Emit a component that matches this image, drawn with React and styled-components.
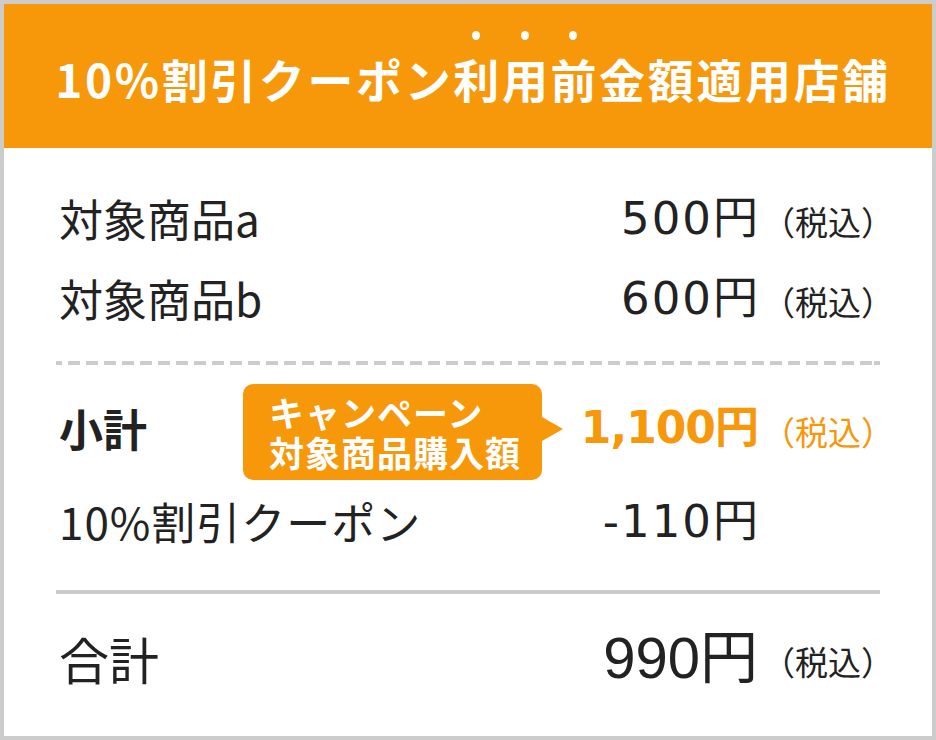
import React from "react";
import styled, { createGlobalStyle } from "styled-components";

const ORANGE = "#f7970a";
const INK = "#222";
const LINE = "#cccccc";

const GlobalStyle = createGlobalStyle`
  html, body {
    margin: 0;
    background: #fff;
  }
  body {
    font-family: "Noto Sans CJK JP", "Noto Sans", sans-serif;
  }
`;

const Card = styled.div`
  width: 936px;
  height: 740px;
  box-sizing: border-box;
  border: 4px solid ${LINE};
  background: #fff;
  display: flex;
  flex-direction: column;
`;

const Header = styled.h1`
  margin: 0;
  flex: none;
  height: 144px;
  box-sizing: border-box;
  padding: 4px 0 0 10px;
  background: ${ORANGE};
  color: #fff;
  display: flex;
  align-items: center;
  justify-content: center;
  font-size: 46px;
  font-weight: 700;
  letter-spacing: 2.6px;
  white-space: nowrap;
`;

const Dotted = styled.span`
  position: relative;
  display: inline-block;
  line-height: 1;
  &::before {
    content: "";
    position: absolute;
    left: 50%;
    top: -24px;
    width: 8px;
    height: 9px;
    margin-left: -5.3px;
    border-radius: 50%;
    background: #fff;
  }
`;

const Body = styled.div`
  padding: 34px 52px 0;
`;

const Row = styled.div`
  display: grid;
  grid-template-columns: 1fr auto 122px;
  align-items: center;
  height: ${(p) => p.$h || 80}px;
  margin-top: ${(p) => p.$mt || 0}px;
  color: ${(p) => (p.$accent ? ORANGE : INK)};
`;

const Label = styled.div`
  display: flex;
  align-items: center;
  padding: 0 0 ${(p) => (p.$flat ? 0 : 8)}px 3px;
  color: ${INK};
  font-size: ${(p) => p.$size || 44}px;
  font-weight: ${(p) => (p.$bold ? 700 : 400)};
  letter-spacing: ${(p) => p.$ls || 0}px;
  line-height: 1;
  white-space: nowrap;
`;

const LabelText = styled.span`
  flex: none;
  width: ${(p) => (p.$w ? `${p.$w}px` : "auto")};
  padding-bottom: 8px;
`;

const Amount = styled.div`
  font-family: ${(p) =>
    p.$face === "narrow"
      ? `"Liberation Sans", "Noto Sans CJK JP", sans-serif`
      : `"DejaVu Sans", "Noto Sans CJK JP", sans-serif`};
  font-size: ${(p) => p.$size || 45}px;
  font-weight: ${(p) => (p.$bold ? 700 : 400)};
  letter-spacing: ${(p) => (p.$ls === undefined ? 2 : p.$ls)}px;
  margin-right: ${(p) => (p.$ls === undefined ? -2 : 0)}px;
  padding-bottom: 8px;
  line-height: 1;
  text-align: right;
  white-space: nowrap;
`;

const Tax = styled.div`
  font-size: 33px;
  line-height: 1;
  padding: 0 0 2px 4px;
  white-space: nowrap;
`;

const Callout = styled.div`
  position: relative;
  flex: none;
  width: 299px;
  height: 96px;
  box-sizing: border-box;
  padding: 8px 0 0 26px;
  background: ${ORANGE};
  border-radius: 10px;
  color: #fff;
  font-size: 35px;
  font-weight: 700;
  line-height: 40px;
  letter-spacing: 1px;
  &::after {
    content: "";
    position: absolute;
    left: 100%;
    top: 33px;
    border-left: 21px solid ${ORANGE};
    border-top: 12.5px solid transparent;
    border-bottom: 12.5px solid transparent;
  }
`;

const Dashed = styled.div`
  height: 4px;
  margin-top: 19px;
  background-image: repeating-linear-gradient(
    to right,
    ${LINE} 0 12px,
    transparent 12px 18px
  );
  background-position: -6px 0;
`;

const Solid = styled.div`
  height: 4px;
  margin-top: 25px;
  background: ${LINE};
`;

const items = [
  { name: "対象商品a", price: "500円" },
  { name: "対象商品b", price: "600円" },
];

export default function App() {
  return (
    <>
      <GlobalStyle />
      <Card>
        <Header>
          10%割引クーポン
          <Dotted>利</Dotted>
          <Dotted>用</Dotted>
          <Dotted>前</Dotted>
          金額適用店舗
        </Header>
        <Body>
          {items.map((it) => (
            <Row key={it.name}>
              <Label>{it.name}</Label>
              <Amount>{it.price}</Amount>
              <Tax>（税込）</Tax>
            </Row>
          ))}
          <Dashed />
          <Row $h={96} $mt={19} $accent>
            <Label $bold $flat>
              <LabelText $w={184}>小計</LabelText>
              <Callout>
                キャンペーン
                <br />
                対象商品購入額
              </Callout>
            </Label>
            <Amount $bold $size={44} $ls={-1}>1,100円</Amount>
            <Tax>（税込）</Tax>
          </Row>
          <Row $mt={5}>
            <Label $ls={1}>10%割引クーポン</Label>
            <Amount>-110円</Amount>
            <Tax />
          </Row>
          <Solid />
          <Row $mt={28}>
            <Label $size={50}>合計</Label>
            <Amount $face="narrow" $size={58} $ls={0}>990円</Amount>
            <Tax>（税込）</Tax>
          </Row>
        </Body>
      </Card>
    </>
  );
}
